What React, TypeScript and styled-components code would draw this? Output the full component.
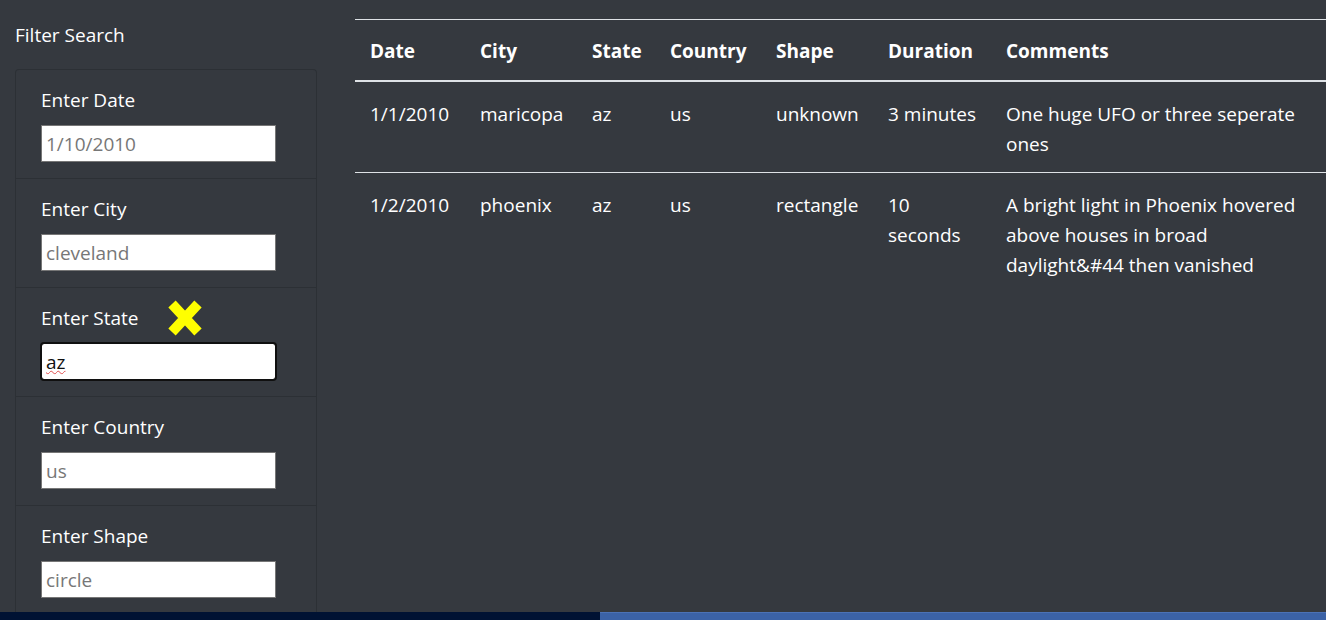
import React from 'react';
import styled, { createGlobalStyle } from 'styled-components';

const GlobalStyle = createGlobalStyle`
  html, body {
    margin: 0;
    padding: 0;
    background: #35393f;
    overflow: hidden;
  }
  body {
    font-family: 'Open Sans', 'Noto Sans', 'Liberation Sans', sans-serif;
    color: #fff;
  }
  * {
    box-sizing: border-box;
  }
`;

const Screen = styled.div`
  width: 1326px;
  height: 620px;
  display: flex;
  flex-direction: column;
  overflow: hidden;
`;

const Page = styled.div`
  flex: 1;
  min-height: 0;
  display: grid;
  grid-template-columns: 302px 1fr;
  column-gap: 38px;
  padding-left: 15px;
  background: #35393f;
  overflow: hidden;
`;

// Sidebar
const Sidebar = styled.aside`
  display: flex;
  flex-direction: column;
`;

const SidebarTitle = styled.div`
  font-size: 19px;
  line-height: 30px;
  padding-top: 20px;
  margin-bottom: 19px;
`;

const FilterList = styled.ul`
  list-style: none;
  margin: 0;
  padding: 0;
  border: 1px solid #2c3035;
  border-radius: 4px;
  border-bottom: none;
`;

const FilterItem = styled.li`
  position: relative;
  padding: 15px 25px 16px 25px;
  border-bottom: 1px solid #2c3035;
`;

const FilterLabel = styled.label`
  display: block;
  font-size: 19px;
  line-height: 30px;
  margin-bottom: 10px;
  color: #fff;
`;

const FilterInput = styled.input<{ $focused?: boolean }>`
  display: block;
  width: 235px;
  height: 37px;
  padding: 0 4px;
  font-family: inherit;
  font-size: 19px;
  color: #111;
  background: #fff;
  border: 1px solid #767676;
  border-radius: ${p => (p.$focused ? '3px' : '0')};
  outline: ${p => (p.$focused ? '2px solid #101010' : 'none')};
  outline-offset: -1px;
  text-decoration: ${p => (p.$focused ? 'underline wavy #e05050' : 'none')};
  text-decoration-thickness: 1px;
  text-underline-offset: 1px;

  &::placeholder {
    color: #777;
  }
`;

const Marker = styled.svg`
  position: absolute;
  left: 151px;
  top: 11px;
`;

// Table
const Main = styled.main`
  padding-top: 19px;
  overflow: hidden;
`;

const Table = styled.table`
  width: 971px;
  table-layout: fixed;
  border-collapse: collapse;
  font-size: 19px;
  line-height: 30px;
  color: #fff;
`;

const HeadCell = styled.th`
  text-align: left;
  font-weight: 700;
  padding: 16px 15px 14px;
  border-top: 1px solid #dee2e6;
  border-bottom: 2px solid #dee2e6;
  vertical-align: bottom;
`;

const Row = styled.tr`
  border-bottom: 1px solid #dee2e6;

  &:last-child {
    border-bottom: none;
  }
`;

const Cell = styled.td`
  padding: 17px 15px 13px;
  vertical-align: top;
`;

// Bottom strip
const StatusStrip = styled.div`
  height: 8px;
  display: grid;
  grid-template-columns: 600px 1fr;
`;

const StripLeft = styled.div`
  background: #001233;
`;

const StripRight = styled.div`
  background: #3b62a6;
  border-top: 1px solid #4b72b6;
`;

const columns = [
  { label: 'Date', width: 110 },
  { label: 'City', width: 112 },
  { label: 'State', width: 78 },
  { label: 'Country', width: 106 },
  { label: 'Shape', width: 112 },
  { label: 'Duration', width: 118 },
  { label: 'Comments', width: 335 },
];

const sightings = [
  ['1/1/2010', 'maricopa', 'az', 'us', 'unknown', '3 minutes', 'One huge UFO or three seperate ones'],
  [
    '1/2/2010',
    'phoenix',
    'az',
    'us',
    'rectangle',
    '10 seconds',
    'A bright light in Phoenix hovered above houses in broad daylight&#44 then vanished',
  ],
];

const filters = [
  { label: 'Enter Date', placeholder: '1/10/2010' },
  { label: 'Enter City', placeholder: 'cleveland' },
  { label: 'Enter State', placeholder: 'CA', value: 'az', focused: true },
  { label: 'Enter Country', placeholder: 'us' },
  { label: 'Enter Shape', placeholder: 'circle' },
];

export default function App() {
  return (
    <>
      <GlobalStyle />
      <Screen>
        <Page>
          <Sidebar>
            <SidebarTitle>Filter Search</SidebarTitle>
            <FilterList>
              {filters.map(f => (
                <FilterItem key={f.label}>
                  <FilterLabel>{f.label}</FilterLabel>
                  <FilterInput
                    placeholder={f.placeholder}
                    defaultValue={f.value}
                    $focused={f.focused}
                  />
                  {f.focused && (
                    <Marker width="36" height="38" viewBox="0 0 36 38">
                      <path d="M5 5 L31 33 M31 5 L5 33" stroke="#ffff00" strokeWidth="10" />
                    </Marker>
                  )}
                </FilterItem>
              ))}
            </FilterList>
          </Sidebar>
          <Main>
            <Table>
              <colgroup>
                {columns.map(c => (
                  <col key={c.label} style={{ width: c.width }} />
                ))}
              </colgroup>
              <thead>
                <tr>
                  {columns.map(c => (
                    <HeadCell key={c.label}>{c.label}</HeadCell>
                  ))}
                </tr>
              </thead>
              <tbody>
                {sightings.map((row, i) => (
                  <Row key={i}>
                    {row.map((v, j) => (
                      <Cell key={j}>{v}</Cell>
                    ))}
                  </Row>
                ))}
              </tbody>
            </Table>
          </Main>
        </Page>
        <StatusStrip>
          <StripLeft />
          <StripRight />
        </StatusStrip>
      </Screen>
    </>
  );
}
